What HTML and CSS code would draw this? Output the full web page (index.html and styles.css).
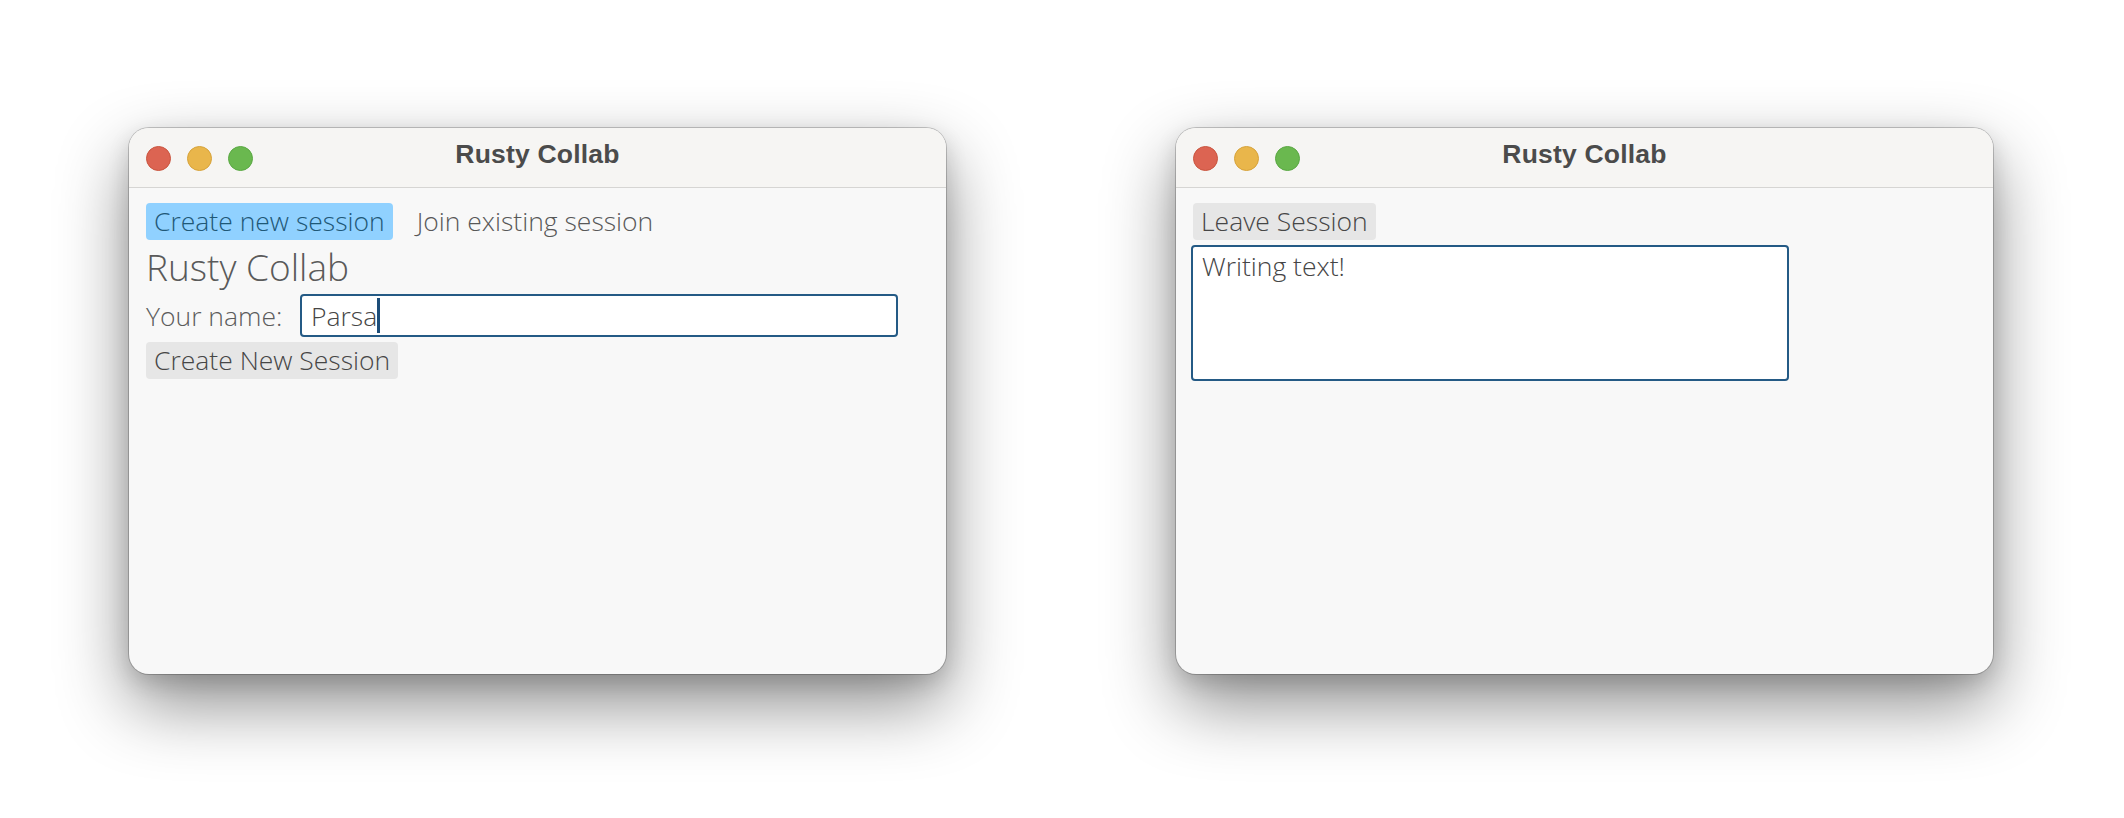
FILE: index.html
```html
<!DOCTYPE html>
<html>
<head>
<meta charset="utf-8">
<link rel="stylesheet" href="styles.css">
</head>
<body>
<div class="desktop">
  <div class="window">
    <div class="titlebar">
      <div class="lights">
        <span class="light red"></span>
        <span class="light yellow"></span>
        <span class="light green"></span>
      </div>
      <div class="title">Rusty Collab</div>
      <div class="spacer"></div>
    </div>
    <div class="content">
      <div class="tabs">
        <span class="btn selected">Create new session</span>
        <span class="btn plain">Join existing session</span>
      </div>
      <div class="heading">Rusty Collab</div>
      <div class="field-row">
        <span class="label">Your name:</span>
        <div class="textedit single"><span class="value">Parsa</span><span class="caret"></span></div>
      </div>
      <div class="row">
        <span class="btn">Create New Session</span>
      </div>
    </div>
  </div>

  <div class="window">
    <div class="titlebar">
      <div class="lights">
        <span class="light red"></span>
        <span class="light yellow"></span>
        <span class="light green"></span>
      </div>
      <div class="title">Rusty Collab</div>
      <div class="spacer"></div>
    </div>
    <div class="content">
      <div class="row">
        <span class="btn">Leave Session</span>
      </div>
      <div class="textedit multi"><span class="value">Writing text!</span></div>
    </div>
  </div>
</div>
</body>
</html>
```

FILE: styles.css
```css
html, body {
  margin: 0;
  padding: 0;
  background: #ffffff;
  height: 100%;
}

.desktop {
  box-sizing: border-box;
  min-height: 818px;
  display: flex;
  align-items: flex-start;
  gap: 230px;
  padding: 128px 0 0 129px;
}

.window {
  width: 817px;
  height: 546px;
  border-radius: 20px;
  background: #f8f8f8;
  overflow: hidden;
  display: flex;
  flex-direction: column;
  box-shadow:
    0 0 0 1px rgba(0, 0, 0, 0.2),
    0 30px 70px rgba(0, 0, 0, 0.45),
    0 8px 22px rgba(0, 0, 0, 0.14);
}

.titlebar {
  height: 59px;
  flex: 0 0 auto;
  background: #f6f5f3;
  border-bottom: 1px solid #d6d5d3;
  display: grid;
  grid-template-columns: 1fr auto 1fr;
  align-items: center;
}

.lights {
  display: flex;
  gap: 16px;
  padding-left: 17px;
  padding-top: 1px;
}

.light {
  width: 25px;
  height: 25px;
  border-radius: 50%;
  box-sizing: border-box;
}

.light.red {
  background: #dc6452;
  border: 1px solid #c9553f;
}

.light.yellow {
  background: #e9b64b;
  border: 1px solid #d6a23a;
}

.light.green {
  background: #6ab84f;
  border: 1px solid #5aa843;
}

.title {
  font-family: "Liberation Sans", Arial, sans-serif;
  font-weight: bold;
  font-size: 26.5px;
  color: #4b4b4b;
  padding-bottom: 6px;
  letter-spacing: 0.2px;
}

.content {
  flex: 1 1 auto;
  display: flex;
  flex-direction: column;
  align-items: flex-start;
  gap: 5px;
  padding: 15px 17px 0 17px;
  font-family: "Open Sans", sans-serif;
  font-weight: 300;
  font-size: 26.5px;
  color: #585858;
}

.tabs {
  display: flex;
  gap: 16px;
}

.row {
  display: flex;
}

.btn {
  height: 37px;
  line-height: 37px;
  padding: 0 8px;
  border-radius: 4px;
  background: #e6e6e6;
  color: #464646;
  white-space: nowrap;
}

.btn.selected {
  background: #90d1ff;
  color: #1f5877;
}

.btn.plain {
  background: transparent;
  color: #585858;
}

.heading {
  height: 44px;
  line-height: 44px;
  font-size: 37px;
  color: #5a5a5a;
}

.field-row {
  display: flex;
  align-items: center;
  gap: 16px;
  height: 43px;
}

.label {
  color: #5c5c5c;
  min-width: 138px;
}

.textedit {
  box-sizing: border-box;
  width: 598px;
  background: #ffffff;
  border: 2px solid #245a85;
  border-radius: 4px;
  color: #454545;
  white-space: nowrap;
}

.textedit.single {
  height: 43px;
  padding: 0 9px;
  display: flex;
  align-items: center;
}

.textedit.multi {
  height: 136px;
  margin-left: -2px;
  padding: 2px 9px;
  line-height: 34px;
}

.caret {
  display: inline-block;
  width: 3px;
  height: 35px;
  background: #1d4d78;
  margin-left: 0;
}
```
